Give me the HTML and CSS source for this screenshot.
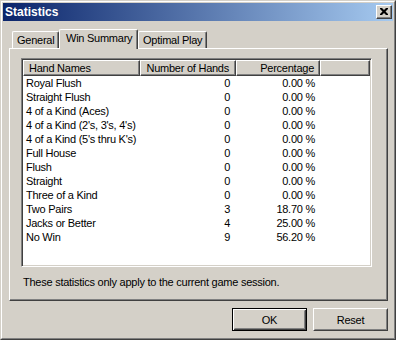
FILE: index.html
```html
<!DOCTYPE html>
<html>
<head>
<meta charset="utf-8">
<link rel="stylesheet" href="styles.css">
</head>
<body>
<div class="window">
  <div class="frame">
    <div class="titlebar">
      <span class="title">Statistics</span>
      <div class="close">
        <svg width="8" height="7" viewBox="0 0 8 7"><path d="M0 0h2l2 2 2-2h2v1l-2.5 2.5L8 6v1H6L4 5 2 7H0V6l2.5-2.5L0 1z" fill="#000"/></svg>
      </div>
    </div>
    <div class="client">
      <div class="tabs">
        <div class="tab t-general">General</div>
        <div class="tab t-win selected">Win Summary</div>
        <div class="tab t-opt">Optimal Play</div>
      </div>
      <div class="panel">
        <div class="list">
          <div class="head">
            <div class="hcell c1">Hand Names</div>
            <div class="hcell c2">Number of Hands</div>
            <div class="hcell c3">Percentage</div>
            <div class="hcell c4"></div>
          </div>
          <div class="row"><span class="c1">Royal Flush</span><span class="c2">0</span><span class="c3">0.00 %</span></div>
          <div class="row"><span class="c1">Straight Flush</span><span class="c2">0</span><span class="c3">0.00 %</span></div>
          <div class="row"><span class="c1">4 of a Kind (Aces)</span><span class="c2">0</span><span class="c3">0.00 %</span></div>
          <div class="row"><span class="c1">4 of a Kind (2's, 3's, 4's)</span><span class="c2">0</span><span class="c3">0.00 %</span></div>
          <div class="row"><span class="c1">4 of a Kind (5's thru K's)</span><span class="c2">0</span><span class="c3">0.00 %</span></div>
          <div class="row"><span class="c1">Full House</span><span class="c2">0</span><span class="c3">0.00 %</span></div>
          <div class="row"><span class="c1">Flush</span><span class="c2">0</span><span class="c3">0.00 %</span></div>
          <div class="row"><span class="c1">Straight</span><span class="c2">0</span><span class="c3">0.00 %</span></div>
          <div class="row"><span class="c1">Three of a Kind</span><span class="c2">0</span><span class="c3">0.00 %</span></div>
          <div class="row"><span class="c1">Two Pairs</span><span class="c2">3</span><span class="c3">18.70 %</span></div>
          <div class="row"><span class="c1">Jacks or Better</span><span class="c2">4</span><span class="c3">25.00 %</span></div>
          <div class="row"><span class="c1">No Win</span><span class="c2">9</span><span class="c3">56.20 %</span></div>
        </div>
        <div class="note">These statistics only apply to the current game session.</div>
      </div>
      <div class="buttons">
        <div class="btn default"><div class="btn-in">OK</div></div>
        <div class="btn"><div class="btn-in">Reset</div></div>
      </div>
    </div>
  </div>
</div>
</body>
</html>
```
FILE: styles.css
```css
html, body {
  margin: 0;
  padding: 0;
  background: #d4d0c8;
}
body {
  font-family: "Liberation Sans", Arial, sans-serif;
  font-size: 11px;
  letter-spacing: -0.25px;
  color: #000;
}
.window {
  width: 396px;
  height: 340px;
  box-sizing: border-box;
  border: 1px solid;
  border-color: #d4d0c8 #404040 #404040 #d4d0c8;
}
.frame {
  height: 100%;
  box-sizing: border-box;
  border: 1px solid;
  border-color: #ffffff #808080 #808080 #ffffff;
  padding: 1px;
  background: #d4d0c8;
}
.titlebar {
  height: 18px;
  background: linear-gradient(to right, #0a246a, #a6caf0);
  display: flex;
  align-items: center;
  justify-content: space-between;
  padding: 0 1px 0 2px;
}
.title {
  color: #fff;
  font-weight: bold;
  font-size: 12px;
  letter-spacing: 0;
  line-height: 18px;
}
.close {
  width: 16px;
  height: 14px;
  box-sizing: border-box;
  background: #d4d0c8;
  border: 1px solid;
  border-color: #ffffff #404040 #404040 #ffffff;
  box-shadow: inset -1px -1px #808080;
  display: flex;
  align-items: center;
  justify-content: center;
  padding: 0 1px 1px 0;
}
.close svg { display: block; }
.client {
  padding: 0 5px 0 6px;
}
.tabs {
  display: flex;
  align-items: flex-end;
  margin-top: 8px;
  padding-left: 3px;
  height: 19px;
}
.tab {
  box-sizing: border-box;
  height: 17px;
  background: #d4d0c8;
  border-top: 1px solid #fff;
  border-left: 1px solid #fff;
  border-right: 1px solid #404040;
  box-shadow: inset -1px 0 #808080;
  border-top-left-radius: 2px;
  border-top-right-radius: 2px;
  padding: 0 4px;
  line-height: 16px;
  white-space: nowrap;
}
.t-general { width: 47px; }
.t-opt { width: 69px; }
.tab.selected {
  width: 79px;
  height: 20px;
  margin-bottom: -1px;
  padding: 0 6px;
  line-height: 17px;
  position: relative;
  z-index: 1;
}
.panel {
  height: 253px;
  box-sizing: border-box;
  border-top: 1px solid #fff;
  border-left: 1px solid #fff;
  border-right: 1px solid #404040;
  border-bottom: 1px solid #404040;
  box-shadow: inset -1px -1px #808080;
  padding: 9px 0 0 11px;
}
.list {
  width: 351px;
  height: 209px;
  box-sizing: border-box;
  background: #fff;
  border: 1px solid;
  border-color: #808080 #ffffff #ffffff #808080;
  box-shadow: inset 1px 1px #404040, inset -1px -1px #d4d0c8;
  padding: 1px;
}
.head, .row {
  display: grid;
  grid-template-columns: 117px 96px 84px 1fr;
}
.head { height: 16px; }
.hcell {
  box-sizing: border-box;
  background: #d4d0c8;
  border-top: 1px solid #fff;
  border-left: 1px solid #fff;
  border-right: 1px solid #404040;
  border-bottom: 1px solid #404040;
  box-shadow: inset -1px -1px #808080;
  line-height: 14px;
  white-space: nowrap;
  overflow: hidden;
}
.hcell.c1 { padding-left: 5px; }
.hcell.c2 { text-align: right; padding-right: 6px; }
.hcell.c3 { text-align: right; padding-right: 5px; }
.row {
  height: 14px;
  line-height: 14px;
  white-space: nowrap;
}
.row .c1 { padding-left: 3px; }
.row .c2 { text-align: right; padding-right: 6px; }
.row .c3 { text-align: right; padding-right: 5px; }
.note {
  margin: 8px 0 0 2px;
  line-height: 14px;
}
.buttons {
  display: flex;
  justify-content: flex-end;
  gap: 6px;
  margin-top: 7px;
}
.btn {
  width: 75px;
  height: 23px;
  box-sizing: border-box;
  border: 1px solid;
  border-color: #ffffff #404040 #404040 #ffffff;
}
.btn-in {
  height: 100%;
  box-sizing: border-box;
  border: 1px solid;
  border-color: #d4d0c8 #808080 #808080 #d4d0c8;
  display: flex;
  align-items: center;
  justify-content: center;
  line-height: 14px;
}
.btn.default {
  border: 1px solid #000;
  box-shadow: inset 1px 1px #fff, inset -1px -1px #404040;
}
.btn.default .btn-in {
  margin: 1px;
  height: calc(100% - 2px);
  border-color: #d4d0c8 #808080 #808080 #d4d0c8;
}
```
